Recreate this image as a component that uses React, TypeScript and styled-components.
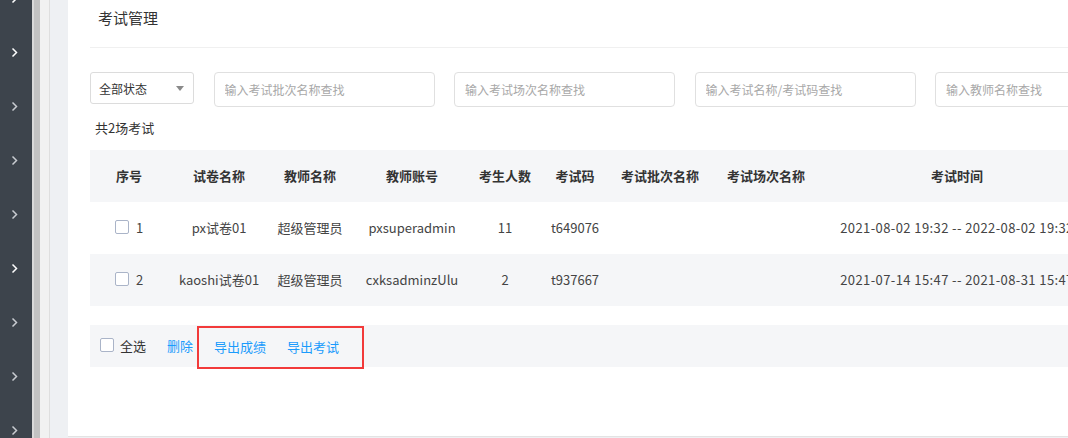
import React from 'react';
import styled, { createGlobalStyle } from 'styled-components';

const GlobalStyle = createGlobalStyle`
  html, body {
    margin: 0;
    padding: 0;
    overflow: hidden;
    background: #eef0f3;
  }
  body {
    font-family: "Noto Sans CJK SC", "Noto Sans", sans-serif;
    color: #333;
  }
`;

const Layout = styled.div`
  display: flex;
  height: 438px;
  width: 1068px;
  overflow: hidden;
`;

const Sidebar = styled.div`
  width: 32px;
  flex: none;
  background: #3d444c;
  display: flex;
  flex-direction: column;
  overflow: hidden;
`;

const SideItem = styled.div<{ $first?: boolean }>`
  flex: none;
  height: 54px;
  display: flex;
  align-items: center;
  padding-left: 11px;
  margin-top: ${(p) => (p.$first ? '-29px' : '0')};
`;

const Strip = styled.div<{ $w: number; $bg: string }>`
  flex: none;
  width: ${(p) => p.$w}px;
  background: ${(p) => p.$bg};
`;

const Panel = styled.main`
  flex: 1;
  min-width: 0;
  height: 436px;
  background: #fff;
  border-bottom: 1px solid #e3e3e3;
  padding-left: 22px;
  overflow: hidden;
`;

const Title = styled.h1`
  margin: 0;
  height: 48px;
  box-sizing: border-box;
  padding: 8px 0 0 8px;
  font-size: 15px;
  line-height: 20px;
  font-weight: 400;
  color: #333;
  border-bottom: 1px solid #f0f0f0;
`;

const FilterRow = styled.div`
  display: flex;
  align-items: flex-start;
  margin-top: 24px;
  gap: 19.5px;
  white-space: nowrap;
`;

const Select = styled.div`
  flex: none;
  width: 104px;
  height: 32px;
  box-sizing: border-box;
  border: 1px solid #dcdcdc;
  border-radius: 3px;
  display: flex;
  align-items: center;
  justify-content: space-between;
  padding: 0 9px 0 8px;
  font-size: 12px;
  color: #333;
`;

const Caret = styled.span`
  width: 0;
  height: 0;
  border-left: 4px solid transparent;
  border-right: 4px solid transparent;
  border-top: 5px solid #8a8a8a;
`;

const Input = styled.input`
  flex: none;
  width: 221px;
  height: 35px;
  box-sizing: border-box;
  border: 1px solid #e0e0e0;
  border-radius: 4px;
  padding: 0 10px;
  font-family: inherit;
  font-size: 12px;
  color: #333;
  outline: none;
  &::placeholder {
    color: #a8a8a8;
  }
`;

const Count = styled.div`
  margin-top: 10px;
  padding-left: 5px;
  font-size: 13px;
  line-height: 22px;
  color: #333;
`;

const cols = '78px 102px 80px 124px 62px 78px 92px 120px 262px';

const Table = styled.div`
  margin-top: 11px;
  width: 998px;
`;

const Row = styled.div<{ $shade?: boolean; $head?: boolean }>`
  display: grid;
  grid-template-columns: ${cols};
  height: 52px;
  align-items: center;
  background: ${(p) => (p.$shade ? '#f5f6f8' : '#fff')};
  font-size: 13px;
  font-weight: ${(p) => (p.$head ? 600 : 400)};
  color: ${(p) => (p.$head ? '#333' : '#444')};
  white-space: nowrap;
  padding-bottom: 2px;
  box-sizing: border-box;
`;

const Cell = styled.div<{ $wide?: boolean }>`
  display: flex;
  align-items: center;
  justify-content: center;
  gap: 7px;
  letter-spacing: ${(p) => (p.$wide ? '0.4px' : 'normal')};
`;

const Check = styled.span`
  display: inline-block;
  width: 12px;
  height: 12px;
  border: 1px solid #aab4c8;
  border-radius: 2px;
  background: #fff;
  flex: none;
`;

const Footer = styled.div`
  margin-top: 19px;
  width: 998px;
  height: 42px;
  background: #f5f6f8;
  display: flex;
  align-items: flex-start;
  padding-left: 10px;
  box-sizing: border-box;
  font-size: 13px;
  white-space: nowrap;
`;

const FootItem = styled.span`
  display: flex;
  align-items: center;
  gap: 6px;
  height: 40px;
  color: #333;
  margin-right: 21px;
`;

const Link = styled.a<{ $gap?: number }>`
  display: flex;
  align-items: center;
  height: 38px;
  color: #1a9bfc;
  text-decoration: none;
  cursor: pointer;
  margin-right: ${(p) => p.$gap ?? 0}px;
`;

const Marked = styled.span`
  display: flex;
  align-items: center;
  height: 43px;
  box-sizing: border-box;
  margin-top: 1px;
  padding: 0 23px 2px 15px;
  border: 2px solid #f23a3a;
`;

const Chevron: React.FC<{ bright?: boolean }> = ({ bright }) => (
  <svg width="8" height="11" viewBox="0 0 8 11">
    <polyline
      points="1.5,1.5 5.5,5.5 1.5,9.5"
      fill="none"
      stroke={bright ? '#ffffff' : '#c9ccd1'}
      strokeWidth="1.5"
    />
  </svg>
);

const rows = [
  { no: 1, paper: 'px试卷01', teacher: '超级管理员', account: 'pxsuperadmin', count: '11', code: 't649076', time: '2021-08-02 19:32 -- 2022-08-02 19:32' },
  { no: 2, paper: 'kaoshi试卷01', teacher: '超级管理员', account: 'cxksadminzUlu', count: '2', code: 't937667', time: '2021-07-14 15:47 -- 2021-08-31 15:47' },
];

const heads = ['序号', '试卷名称', '教师名称', '教师账号', '考生人数', '考试码', '考试批次名称', '考试场次名称', '考试时间'];

const App: React.FC = () => {
  const bright = [true, true, false, false, false, true, false, false, false];
  return (
    <>
      <GlobalStyle />
      <Layout>
        <Sidebar>
          {bright.map((b, i) => (
            <SideItem key={i} $first={i === 0}>
              <Chevron bright={b} />
            </SideItem>
          ))}
        </Sidebar>
        <Strip $w={2} $bg="#d9d9d9" />
        <Strip $w={6} $bg="#c2c2c2" />
        <Strip $w={9} $bg="#f1f1f1" />
        <Strip $w={1} $bg="#dedede" />
        <Strip $w={18} $bg="#eef0f3" />
        <Panel>
          <Title>考试管理</Title>
          <FilterRow>
            <Select>
              <span>全部状态</span>
              <Caret />
            </Select>
            <Input placeholder="输入考试批次名称查找" />
            <Input placeholder="输入考试场次名称查找" />
            <Input placeholder="输入考试名称/考试码查找" />
            <Input placeholder="输入教师名称查找" />
          </FilterRow>
          <Count>共2场考试</Count>
          <Table>
            <Row $head $shade>
              {heads.map((h) => (
                <Cell key={h}>{h}</Cell>
              ))}
            </Row>
            {rows.map((r, i) => (
              <Row key={r.no} $shade={i % 2 === 1}>
                <Cell>
                  <Check />
                  <span>{r.no}</span>
                </Cell>
                <Cell>{r.paper}</Cell>
                <Cell>{r.teacher}</Cell>
                <Cell>{r.account}</Cell>
                <Cell>{r.count}</Cell>
                <Cell>{r.code}</Cell>
                <Cell />
                <Cell />
                <Cell $wide>{r.time}</Cell>
              </Row>
            ))}
          </Table>
          <Footer>
            <FootItem>
              <Check />
              <span>全选</span>
            </FootItem>
            <Link $gap={4} style={{ height: 40 }}>删除</Link>
            <Marked>
              <Link $gap={21}>导出成绩</Link>
              <Link>导出考试</Link>
            </Marked>
          </Footer>
        </Panel>
      </Layout>
    </>
  );
};

export default App;
